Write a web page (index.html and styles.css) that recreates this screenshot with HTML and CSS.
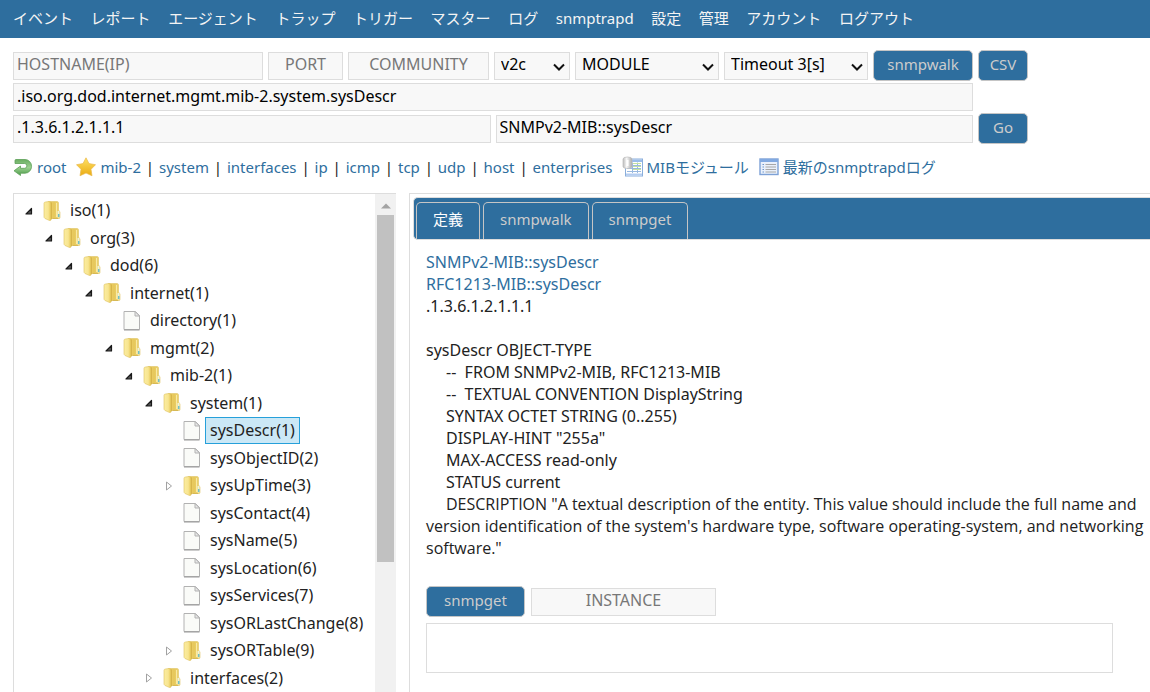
FILE: index.html
```html
<!DOCTYPE html>
<html lang="ja">
<head>
<meta charset="utf-8">
<meta name="viewport" content="width=device-width, initial-scale=1">
<title>MIB</title>
<link rel="stylesheet" href="styles.css">
</head>
<body>
<svg class="sprite" aria-hidden="true">
  <defs>
    <linearGradient id="gold" x1="0" x2="1"><stop offset="0" stop-color="#f0d772"/><stop offset=".5" stop-color="#e6c75a"/><stop offset="1" stop-color="#f0d878"/></linearGradient>
    <linearGradient id="goldFront" x1="0" x2="1"><stop offset="0" stop-color="#fbeda0"/><stop offset=".6" stop-color="#f8e590"/><stop offset="1" stop-color="#e6c753"/></linearGradient>
    <linearGradient id="green" x1="0" y1="0" x2="0" y2="1"><stop offset="0" stop-color="#6aad62"/><stop offset=".5" stop-color="#9bd08f"/><stop offset="1" stop-color="#4d9c4a"/></linearGradient>
    <linearGradient id="starFill" x1="0" y1="0" x2="0" y2="1"><stop offset="0" stop-color="#ffe266"/><stop offset="1" stop-color="#eaab13"/></linearGradient>
    <linearGradient id="steel" x1="0" x2="1"><stop offset="0" stop-color="#bbb"/><stop offset=".4" stop-color="#f8f8f8"/><stop offset="1" stop-color="#aaa"/></linearGradient>
    <symbol id="folder" viewBox="0 0 18 22">
      <path d="M5 2.500Q5 1.500 6 1.500H14Q15.500 1.500 15.500 3V10L17 12V17.500Q17 18.500 16 18.500H6Z" fill="url(#gold)" stroke="#dfc565" stroke-width=".6"/>
      <path d="M13.500 3V17" stroke="#f9eaa5"/>
      <path d="M7.500 1.500Q9 2 9 4V19L7.500 20Z" fill="#d4b145"/>
      <path d="M1 3.500Q1 2 2.500 2L6 1.500Q8 2 8 4V19Q8 21 6.500 20.500L2 18.500Q1 18 1 16.500Z" fill="url(#goldFront)" stroke="#dec05a" stroke-width=".6"/>
      <path d="M14.500 11H16.500V17.500H14.500Z" fill="#eef3d9"/><path d="M15 14H16.500V17H15Z" fill="#70bfc7"/>
      <path d="M9.500 18.500H15" stroke="#d2b24a" stroke-width=".8"/>
    </symbol>
    <symbol id="file" viewBox="0 0 18 22">
      <path d="M1 1.500H12.500L16.500 5.500V19.500H1Z" fill="#fafbf8" stroke="#b2b2b2"/>
      <path d="M1 20H16.500" stroke="#999"/>
      <path d="M12 1.500V6H16.500Z" fill="#e8e8e8" stroke="#b2b2b2"/>
    </symbol>
    <symbol id="open" viewBox="0 0 10 10"><path d="M2 8L7.500 2.500V8Z" fill="#555" stroke="#1a1a1a" stroke-width="1.200" stroke-linejoin="round"/></symbol>
    <symbol id="closed" viewBox="0 0 10 10"><path d="M2.500 1V9L7.500 5Z" fill="#fff" stroke="#a2a2a2"/></symbol>
    <symbol id="root" viewBox="0 0 20 20"><path d="M3 2.500Q2 2.500 2 3.500V6.500H11.500A2.300 2.300 0 0 1 11.500 11.300H7.500V9L1 13.800 7.500 18.500V16.200H12A6.500 6.800 0 0 0 12 2.500Z" fill="url(#green)" stroke="#5ca057" stroke-width=".8" stroke-linejoin="round"/></symbol>
    <symbol id="star" viewBox="0 0 20 20"><path d="M10 .8L13 6.600 19.500 7.700 15 12.300 16 18.800 10 16 4 18.800 5 12.300.5 7.700 7 6.600Z" fill="url(#starFill)" stroke="#eab94c" stroke-width=".7" stroke-linejoin="round"/></symbol>
    <symbol id="module" viewBox="0 0 22 22">
      <rect x="3.500" y="3" width="17" height="17" fill="#fff" stroke="#8aaedb"/>
      <path d="M4 3.500H20V6H4Z" fill="#9abce9"/>
      <path d="M10.500 6.500V17M15.500 6.500V17M5 9.500H19M5 12.500H19M5 15.500H19" stroke="#98b8df"/>
      <path d="M11 7.500H19M11 10.500H19M11 13.500H19" stroke="#c4e29f"/>
      <path d="M4 17.500H20V19.500H4Z" fill="#b4cdf1"/>
      <path d="M1 3Q1 1 5.500 1T10 3V10.500Q10 12.500 5.500 12.500T1 10.500Z" fill="url(#steel)" stroke="#bbb" stroke-width=".7"/>
      <path d="M5.500 4V10" stroke="#fff" stroke-width="2"/>
    </symbol>
    <symbol id="list" viewBox="0 0 20 18">
      <rect x="1" y="1" width="18" height="15.500" fill="#e9f0fb" stroke="#7da1d6" stroke-width="1.400"/>
      <path d="M1 1H19V4H1Z" fill="#81a9e1"/>
      <path d="M3.500 6.500H5M3.500 9H5M3.500 11.500H5M3.500 14H5" stroke="#6e96cd" stroke-width="1.200"/>
      <path d="M6.500 6.500H17M6.500 9H17M6.500 11.500H17M6.500 14H17" stroke="#a7a7a7" stroke-width="1.200"/>
    </symbol>
  </defs>
</svg>

<nav class="menu">
  <div class="menu-items">
    <a href="#">イベント</a><a href="#">レポート</a><a href="#">エージェント</a><a href="#">トラップ</a><a href="#">トリガー</a><a href="#">マスター</a><a href="#">ログ</a><a href="#">snmptrapd</a><a href="#">設定</a><a href="#">管理</a><a href="#">アカウント</a><a href="#">ログアウト</a>
  </div>
</nav>

<form class="query">
  <div class="agent-row">
    <input class="field" type="text" placeholder="HOSTNAME(IP)" aria-label="HOSTNAME(IP)">
    <input class="field centered" type="text" placeholder="PORT" aria-label="PORT">
    <input class="field centered" type="text" placeholder="COMMUNITY" aria-label="COMMUNITY">
    <span class="select"><select class="field" aria-label="Version"><option>v2c</option></select><svg viewBox="0 0 12 8"><path d="M1 1.500L6 6.500 11 1.500"/></svg></span>
    <span class="select"><select class="field" aria-label="Module"><option>MODULE</option></select><svg viewBox="0 0 12 8"><path d="M1 1.500L6 6.500 11 1.500"/></svg></span>
    <span class="select"><select class="field" aria-label="Timeout"><option>Timeout 3[s]</option></select><svg viewBox="0 0 12 8"><path d="M1 1.500L6 6.500 11 1.500"/></svg></span>
    <button class="button" type="button">snmpwalk</button>
  </div>
  <button class="button" type="button">CSV</button>
  <input class="field name" type="text" value=".iso.org.dod.internet.mgmt.mib-2.system.sysDescr" aria-label="Name">
  <div class="oid-row">
    <input class="field" type="text" value=".1.3.6.1.2.1.1.1" aria-label="OID">
    <input class="field" type="text" value="SNMPv2-MIB::sysDescr" aria-label="Symbol">
  </div>
  <button class="button" type="button">Go</button>
</form>

<div class="shortcuts">
  <a href="#"><svg class="mark"><use href="#root"/></svg>root</a>
  <a href="#" class="starred"><svg class="mark"><use href="#star"/></svg>mib-2</a><i>|</i><a href="#">system</a><i>|</i><a href="#">interfaces</a><i>|</i><a href="#">ip</a><i>|</i><a href="#">icmp</a><i>|</i><a href="#">tcp</a><i>|</i><a href="#">udp</a><i>|</i><a href="#">host</a><i>|</i><a href="#">enterprises</a>
  <a href="#" class="tight"><svg class="mark large"><use href="#module"/></svg>MIBモジュール</a>
  <a href="#" class="tight log"><svg class="mark"><use href="#list"/></svg>最新のsnmptrapdログ</a>
</div>

<main class="panes">
  <section class="tree-pane">
    <ul class="tree">
      <li class="l1"><svg class="arrow"><use href="#open"/></svg><svg class="icon"><use href="#folder"/></svg><a href="#">iso(1)</a></li>
      <li class="l2"><svg class="arrow"><use href="#open"/></svg><svg class="icon"><use href="#folder"/></svg><a href="#">org(3)</a></li>
      <li class="l3"><svg class="arrow"><use href="#open"/></svg><svg class="icon"><use href="#folder"/></svg><a href="#">dod(6)</a></li>
      <li class="l4"><svg class="arrow"><use href="#open"/></svg><svg class="icon"><use href="#folder"/></svg><a href="#">internet(1)</a></li>
      <li class="l5"><svg class="arrow"></svg><svg class="icon"><use href="#file"/></svg><a href="#">directory(1)</a></li>
      <li class="l5"><svg class="arrow"><use href="#open"/></svg><svg class="icon"><use href="#folder"/></svg><a href="#">mgmt(2)</a></li>
      <li class="l6"><svg class="arrow"><use href="#open"/></svg><svg class="icon"><use href="#folder"/></svg><a href="#">mib-2(1)</a></li>
      <li class="l7"><svg class="arrow"><use href="#open"/></svg><svg class="icon"><use href="#folder"/></svg><a href="#">system(1)</a></li>
      <li class="l8"><svg class="arrow"></svg><svg class="icon"><use href="#file"/></svg><a href="#" class="selected">sysDescr(1)</a></li>
      <li class="l8"><svg class="arrow"></svg><svg class="icon"><use href="#file"/></svg><a href="#">sysObjectID(2)</a></li>
      <li class="l8"><svg class="arrow"><use href="#closed"/></svg><svg class="icon"><use href="#folder"/></svg><a href="#">sysUpTime(3)</a></li>
      <li class="l8"><svg class="arrow"></svg><svg class="icon"><use href="#file"/></svg><a href="#">sysContact(4)</a></li>
      <li class="l8"><svg class="arrow"></svg><svg class="icon"><use href="#file"/></svg><a href="#">sysName(5)</a></li>
      <li class="l8"><svg class="arrow"></svg><svg class="icon"><use href="#file"/></svg><a href="#">sysLocation(6)</a></li>
      <li class="l8"><svg class="arrow"></svg><svg class="icon"><use href="#file"/></svg><a href="#">sysServices(7)</a></li>
      <li class="l8"><svg class="arrow"></svg><svg class="icon"><use href="#file"/></svg><a href="#">sysORLastChange(8)</a></li>
      <li class="l8"><svg class="arrow"><use href="#closed"/></svg><svg class="icon"><use href="#folder"/></svg><a href="#">sysORTable(9)</a></li>
      <li class="l7"><svg class="arrow"><use href="#closed"/></svg><svg class="icon"><use href="#folder"/></svg><a href="#">interfaces(2)</a></li>
    </ul>
    <div class="scrollbar"><svg class="scroll-up" viewBox="0 0 10 6"><path d="M0 5.500L5 .5 10 5.500Z"/></svg><div class="thumb"></div></div>
  </section>

  <section class="detail">
    <div class="tabs" role="tablist">
      <button class="tab active" type="button" role="tab" aria-selected="true">定義</button>
      <button class="tab" type="button" role="tab">snmpwalk</button>
      <button class="tab" type="button" role="tab">snmpget</button>
    </div>
    <div class="content">
      <a href="#">SNMPv2-MIB::sysDescr</a>
      <a href="#">RFC1213-MIB::sysDescr</a>
      <p>.1.3.6.1.2.1.1.1</p>
      <div class="definition">
        <p>sysDescr OBJECT-TYPE</p>
        <p class="clause">--&nbsp; FROM SNMPv2-MIB, RFC1213-MIB</p>
        <p class="clause">--&nbsp; TEXTUAL CONVENTION DisplayString</p>
        <p class="clause">SYNTAX OCTET STRING (0..255)</p>
        <p class="clause">DISPLAY-HINT "255a"</p>
        <p class="clause">MAX-ACCESS read-only</p>
        <p class="clause">STATUS current</p>
        <p class="description">DESCRIPTION "A textual description of the entity. This value should include the full name and version identification of the system's hardware type, software operating-system, and networking software."</p>
      </div>
      <form class="get">
        <button class="button" type="button">snmpget</button>
        <input class="field centered" type="text" placeholder="INSTANCE" aria-label="INSTANCE">
      </form>
      <textarea class="result" aria-label="Result"></textarea>
    </div>
  </section>
</main>
</body>
</html>
```
FILE: styles.css
```css
* { box-sizing: border-box; }

body {
  margin: 0;
  height: 100vh;
  overflow: hidden;
  display: flex;
  flex-direction: column;
  background: #fff;
  color: #222;
  font: 15px/22px "Noto Sans", "Noto Sans CJK JP", sans-serif;
}

a { color: #2e6e9e; text-decoration: none; }
p { margin: 0; }
button, input, select, textarea { font: inherit; margin: 0; }
.sprite { position: absolute; width: 0; height: 0; }

.menu {
  flex: none;
  padding: 0 13px;
  line-height: 36px;
  background: #2e6e9e;
  border-bottom: 2px solid #2e6e9e;
  white-space: nowrap;
}
.menu-items { display: flex; justify-content: space-between; max-width: 901px; }
.menu a { color: #f4f4f4; }

.query {
  flex: none;
  display: grid;
  grid-template-columns: 1fr 50px;
  gap: 0 5px;
  align-items: center;
  max-width: 1028px;
  padding: 12px 0 0 13px;
}
.agent-row {
  display: grid;
  grid-template-columns: 250fr 75fr 141fr 76fr 144fr 144fr 100px;
  gap: 5px;
  align-items: center;
}
.oid-row { grid-column: 1; display: grid; grid-template-columns: 1fr 1fr; gap: 5px; }

.field {
  width: 100%;
  min-width: 0;
  height: 28px;
  padding: 0 3px 3px;
  border: 1px solid #ddd;
  border-radius: 0;
  background: #f8f8f8;
  color: #000;
  font-size: 16px;
  outline: 0;
}
.field::placeholder { color: #777; opacity: 1; }
.centered { text-align: center; }
.name { grid-column: 1; margin: 2px 0; padding-bottom: 2px; }

.select { position: relative; min-width: 0; }
.select .field { display: block; padding: 0 6px 3px; appearance: none; }
.select svg {
  position: absolute;
  right: 5px;
  top: 11px;
  width: 12px;
  height: 8px;
  fill: none;
  stroke: #111;
  stroke-width: 2;
  pointer-events: none;
}

.button {
  height: 31px;
  padding: 0 0 3px;
  border: 1px solid #c5c5c5;
  border-radius: 5px;
  background: #2e6e9e;
  color: #ccc;
}

.shortcuts {
  flex: none;
  display: flex;
  align-items: center;
  height: 49px;
  padding: 0 0 3px 13px;
  white-space: nowrap;
}
.shortcuts a { display: flex; align-items: center; gap: 4px; }
.shortcuts i { width: 18px; text-align: center; font-style: normal; }
.shortcuts .starred { margin-left: 10px; }
.shortcuts .tight { gap: 2px; margin-left: 10px; }
.shortcuts .log { gap: 4px; }
.mark { width: 20px; height: 20px; }
.mark.large { width: 22px; height: 22px; }

.panes {
  flex: 1;
  min-height: 0;
  display: flex;
  gap: 13px;
  padding-left: 13px;
}

.tree-pane {
  flex: none;
  width: 383px;
  display: flex;
  overflow: hidden;
  border: solid #ddd;
  border-width: 1px 0 0 1px;
  font-size: 16px;
}
.tree { flex: 1; margin: 0; padding: 3px 0 0; list-style: none; }
.tree li { display: flex; align-items: center; height: 27px; }
.tree li:nth-child(even) { height: 28px; }
.tree a { padding: 1px 4px 2px; border: 1px solid transparent; color: #222; }
.tree .selected { border-color: #26a0da; background: #cbe8f6; }
.l1 { padding-left: 10px; }
.l2 { padding-left: 30px; }
.l3 { padding-left: 50px; }
.l4 { padding-left: 70px; }
.l5 { padding-left: 90px; }
.l6 { padding-left: 110px; }
.l7 { padding-left: 130px; }
.l8 { padding-left: 150px; }
.arrow { width: 10px; height: 10px; margin-right: 9px; }
.icon { width: 18px; height: 22px; margin-right: 4px; }

.scrollbar { width: 21px; padding: 0 2px; background: #f1f1f1; }
.scroll-up { display: block; width: 10px; height: 6px; margin: 9px auto 6px; fill: #a3a3a3; }
.thumb { height: 347px; background: #c1c1c1; }

.detail {
  flex: 1;
  min-width: 0;
  padding: 3px 0 0 3px;
  border: solid #ddd;
  border-width: 1px 0 0 1px;
}
.tabs {
  display: flex;
  gap: 3px;
  height: 43px;
  padding: 4px 2px 0;
  border: solid #ddd;
  border-width: 1px 0 1px 1px;
  border-radius: 5px 0 0 5px;
  background: #2e6e9e;
}
.tab {
  padding: 0 16px 5px;
  border: 1px solid #c5c5c5;
  border-bottom: 0;
  border-radius: 5px 5px 0 0;
  background: #2e6e9e;
  color: #ccc;
}
.tab.active { color: #fff; }

.content { padding: 11px 0 0 13px; font-size: 16px; }
.content > a { display: block; }
.definition { margin: 22px 0; }
.clause { padding-left: 20px; }
.description { font-family: "Open Sans", "Noto Sans", sans-serif; text-indent: 20px; }
.get {
  display: grid;
  grid-template-columns: 99px 185px;
  gap: 6px;
  align-items: center;
  padding-top: 5px;
}
.get .button { font-size: 15px; }
.result {
  display: block;
  width: calc(100% - 37px);
  height: 50px;
  margin-top: 6px;
  border: 1px solid #ddd;
  resize: none;
}
```
